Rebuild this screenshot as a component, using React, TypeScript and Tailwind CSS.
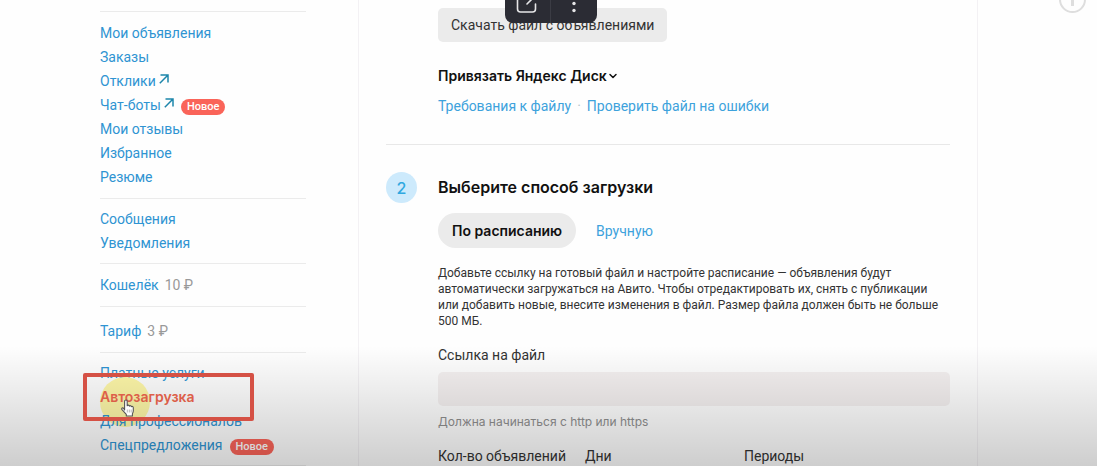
import React, { useState } from 'react';
import { ChevronDown } from 'lucide-react';

type NavItem = {
    label: string;
    external?: boolean;
    isNew?: boolean;
    amount?: string;
    active?: boolean;
};

// Sidebar groups, split by thin dividers
const navGroups: { id: string; spacing: string; items: NavItem[] }[] = [
    {
        id: 'profile',
        spacing: 'py-[9px]',
        items: [
            { label: 'Мои объявления' },
            { label: 'Заказы' },
            { label: 'Отклики', external: true },
            { label: 'Чат-боты', external: true, isNew: true },
            { label: 'Мои отзывы' },
            { label: 'Избранное' },
            { label: 'Резюме' }
        ]
    },
    { id: 'messages', spacing: 'py-2', items: [{ label: 'Сообщения' }, { label: 'Уведомления' }] },
    { id: 'wallet', spacing: 'py-[9px]', items: [{ label: 'Кошелёк', amount: '10 ₽' }] },
    { id: 'tariff', spacing: 'pt-3 pb-[9px]', items: [{ label: 'Тариф', amount: '3 ₽' }] },
    {
        id: 'services',
        spacing: 'py-2',
        items: [
            { label: 'Платные услуги' },
            { label: 'Автозагрузка', active: true },
            { label: 'Для профессионалов' },
            { label: 'Спецпредложения', isNew: true }
        ]
    }
];

const HandCursor = () => (
    <svg className="h-[18px] w-[15px]" viewBox="0 0 15 18" aria-hidden="true">
        <path
            d="M4.6 11V2.4c0-1.8 2.6-1.8 2.6 0v4.4c.3-1 2-.9 2.2.3.5-.8 1.9-.5 2 .6.6-.6 1.9-.2 1.9 1v3.1c0 1.3-.5 2-.9 3V17H6.3v-1.6L2 10.6c-1-1.3.7-2.4 1.7-1.2z"
            fill="#fff"
            stroke="#555"
            strokeWidth="1.1"
            strokeLinejoin="round"
        />
        <path d="M7.3 10.5v3M9.3 10.5v3M11.2 10.5v3" stroke="#999" strokeWidth="0.7" />
    </svg>
);

const ExternalArrow = () => (
    <svg className="-mt-1 ml-[3px] size-[10px] text-[#1d86ab]" viewBox="0 0 10 10" fill="none" stroke="currentColor" strokeWidth="1.5" aria-hidden="true">
        <path d="M1.500 1H9V8.500M9 1L0.800 9.200" />
    </svg>
);

const NavRow = ({ item }: { item: NavItem }) => (
    <li className="relative flex h-6 items-center whitespace-nowrap">
        {item.active && <span className="absolute left-0 -top-2 size-[50px] rounded-full bg-[#fef7a8]" />}
        <a
            href="#"
            className={`relative flex items-center ${item.active ? "font-['Inter'] font-semibold text-[#f0674f]" : 'text-[#2f94d2]'}`}
        >
            {item.label}
            {item.external && <ExternalArrow />}
        </a>
        {item.amount && <span className="ml-1.5 text-[#999]">{item.amount}</span>}
        {item.isNew && (
            <span className="mt-1 ml-[7px] h-4 rounded-full bg-[#fa6459] px-1.5 text-[11px] leading-4 font-medium text-white">
                Новое
            </span>
        )}
    </li>
);

const Sidebar = () => (
    <nav className="mt-[11px] w-[206px] shrink-0 border-t border-[#ebebeb]">
        {navGroups.map(group => (
            <ul key={group.id} className={`border-b border-[#ebebeb] ${group.spacing}`}>
                {group.items.map(item => (
                    <NavRow key={item.label} item={item} />
                ))}
            </ul>
        ))}
    </nav>
);

const Toolbar = () => (
    <div className="fixed top-0 left-[46%] z-20 flex h-[23px] w-[92px] overflow-hidden rounded-b-lg bg-[#2b2c34] text-[#e6e6e8]">
        <button className="flex flex-1 justify-center border-r border-[#3b3c44]" aria-label="Открыть">
            <svg width="24" height="14" viewBox="0 0 24 14" fill="none" stroke="currentColor" strokeWidth="1.6" strokeLinecap="round">
                <path d="M9-5H5.500Q2.500-5 2.500-2V9q0 3 3 3h12q3 0 3-3V4" />
                <path d="M12 4L21-5" />
            </svg>
        </button>
        <button className="flex flex-1 justify-center" aria-label="Ещё">
            <svg width="8" height="14" viewBox="0 0 8 14" fill="currentColor">
                <circle cx="4" cy="-3" r="1.7" />
                <circle cx="4" cy="3.500" r="1.700" />
                <circle cx="4" cy="10.500" r="1.700" />
            </svg>
        </button>
    </div>
);

const UploadPanel = () => {
    const [mode, setMode] = useState('schedule');
    const [fileUrl, setFileUrl] = useState('');

    return (
        <main className="min-w-0 flex-1 border-x border-[#f3f1f4] px-[27px] pt-2">
            <div className="flex flex-col items-start border-b border-[#e8e8e8] pb-7 pl-[52px]">
                <button className="h-[34px] rounded-[5px] bg-[#ebebeb] px-[13px] text-[#333]">
                    Скачать файл с объявлениями
                </button>
                <button className="mt-6 flex h-5 items-center font-['Inter'] font-semibold text-[#111]">
                    Привязать Яндекс Диск
                    <ChevronDown className="size-3" strokeWidth={3} />
                </button>
                <div className="mt-2.5 flex h-5 items-center gap-1.5 text-[#3da2dc]">
                    <a href="#">Требования к файлу</a>
                    <span className="text-[#b5c4cc]">·</span>
                    <a href="#">Проверить файл на ошибки</a>
                </div>
            </div>

            <section className="flex pt-[27px]">
                <div className="mr-[21px] flex size-[31px] shrink-0 items-center justify-center rounded-full bg-[#cdeafc] font-['Inter'] text-base font-medium text-[#2fa8e0]">
                    2
                </div>
                <div className="min-w-0 flex-1">
                    <h2 className="font-['Inter'] text-base leading-[31px] font-semibold text-[#111]">Выберите способ загрузки</h2>

                    <div className="mt-2.5 flex items-center">
                        <button
                            className={`h-[35px] rounded-full px-3.5 ${mode === 'schedule' ? "bg-[#ebebeb] font-['Inter'] font-semibold text-[#111]" : 'text-[#3da2dc]'}`}
                            onClick={() => setMode('schedule')}
                        >
                            По расписанию
                        </button>
                        <button
                            className={`ml-1.5 h-[35px] rounded-full px-3.5 ${mode === 'manual' ? "bg-[#ebebeb] font-['Inter'] font-semibold text-[#111]" : 'text-[#3da2dc]'}`}
                            onClick={() => setMode('manual')}
                        >
                            Вручную
                        </button>
                    </div>

                    <p className="mt-[17px] pr-1.5 text-xs leading-4 text-[#333]">
                        Добавьте ссылку на готовый файл и настройте расписание — объявления будут
                        автоматически загружаться на Авито. Чтобы отредактировать их, снять с публикации
                        или добавить новые, внесите изменения в файл. Размер файла должен быть не больше
                        500 МБ.
                    </p>

                    <label htmlFor="file-url" className="mt-4 block leading-5 text-[#333]">Ссылка на файл</label>
                    <input
                        id="file-url"
                        type="url"
                        value={fileUrl}
                        onChange={e => setFileUrl(e.target.value)}
                        className="mt-[7px] block h-[34px] w-full rounded-[5px] bg-[#f4f0f0] px-3"
                    />
                    <p className="mt-1.5 font-['Inter'] text-xs leading-5 text-[#8f8f8f]">Должна начинаться с http или https</p>

                    <div className="mt-3.5 flex h-5 items-center text-[#333]">
                        <span className="w-[147px]">Кол-во объявлений</span>
                        <span className="w-[159px]">Дни</span>
                        <span>Периоды</span>
                    </div>
                </div>
            </section>
        </main>
    );
};

const App = () => {
    return (
        <div className="relative flex min-h-screen overflow-hidden bg-[#fefefe] pr-[119px] pl-[100px] font-['Roboto','Liberation_Sans',sans-serif] text-sm">
            <Sidebar />
            <div className="ml-[52px] flex min-w-0 flex-1">
                <UploadPanel />
            </div>
            <Toolbar />

            {/* Info button in the corner */}
            <button className="fixed -top-3.5 right-[11px] flex size-[27px] justify-center rounded-full border-2 border-[#dedede]" aria-label="Информация">
                <span className="mt-1.5 h-3 w-[3px] bg-[#dedede]" />
            </button>

            {/* Player shade along the bottom edge */}
            <div className="pointer-events-none absolute inset-x-0 bottom-0 h-30 bg-linear-to-b from-black/0 to-black/19" />

            {/* Callout around the active item */}
            <div className="pointer-events-none absolute top-[373px] left-[83px] h-12 w-[171px] rounded-xs border-4 border-[#d55145]">
                <div className="absolute top-[22px] left-[33px]">
                    <HandCursor />
                </div>
            </div>
        </div>
    );
};

export default App;
